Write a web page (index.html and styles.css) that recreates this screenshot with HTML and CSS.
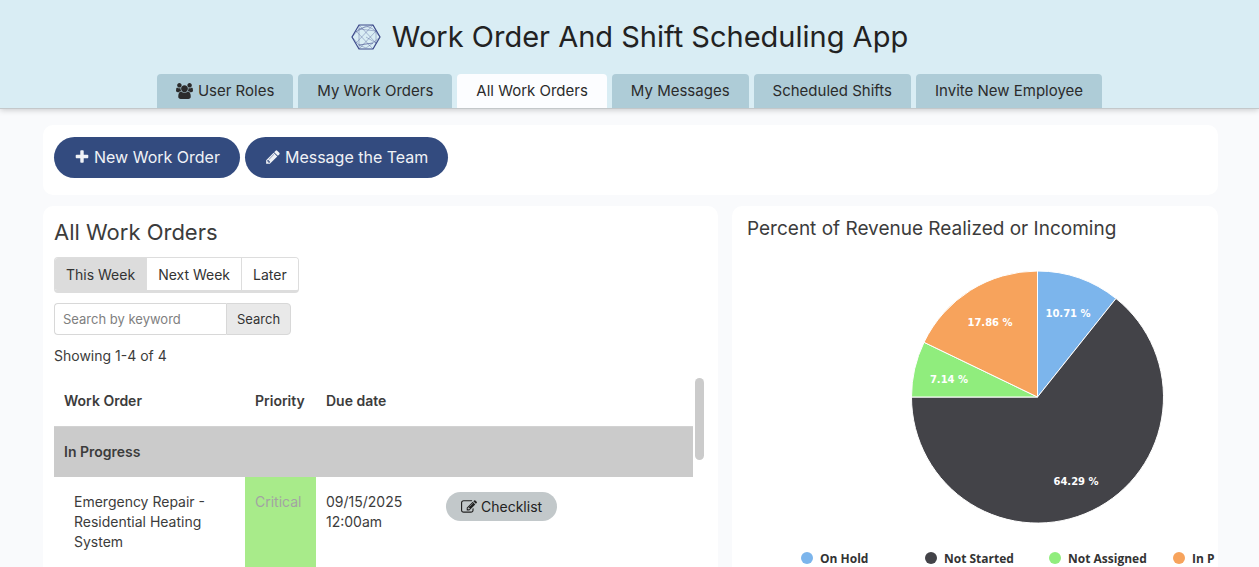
FILE: index.html
```
<!DOCTYPE html>
<html lang="en">
  <head>
    <meta charset="UTF-8" />
    <meta name="viewport" content="width=device-width, initial-scale=1.0" />
    <title>Work Order And Shift Scheduling App</title>
    <link rel="stylesheet" href="styles.css">
  </head>
  <body>
    <header class="header">
      <h1 class="app-title">
        <svg class="logo" viewBox="0 0 30 26" aria-hidden="true">
          <path class="logo-web" d="M8 1V25M22 1L25 7V19L22 25M8 5L22 1M8 1L25 19M22 1L5 19M5 7L22 25M25 7L8 25M1 13L8 5L25 7M1 13L8 21L22 19M29 13L22 19L8 21M29 13L22 5L15 2L5 8M15 13L25 19M8 21L15 24L22 19" />
          <path class="logo-edge" d="M8 1H22L29 13L22 25H8L1 13Z" />
        </svg>
        Work Order And Shift Scheduling App
      </h1>
      <nav class="tabs">
        <a class="tab" href="#">
          <svg class="icon icon-users" viewBox="0 0 1920 1792" aria-hidden="true"><path d="M593 896q-162 5-265 128h-134q-82 0-138-40.5t-56-118.5q0-353 124-353 6 0 43.5 21t97.5 42.5 119 21.5q67 0 133-23-5 37-5 66 0 139 81 256zm1071 637q0 120-73 189.5t-194 69.5h-874q-121 0-194-69.5t-73-189.5q0-53 3.5-103.5t14-109 26.5-108.5 43-97.5 62-81 85.5-53.5 111.5-20q10 0 43 21.5t73 48 107 48 135 21.5 135-21.5 107-48 73-48 43-21.5q61 0 111.5 20t85.5 53.5 62 81 43 97.5 26.5 108.5 14 109 3.5 103.5zm-1024-1277q0 106-75 181t-181 75-181-75-75-181 75-181 181-75 181 75 75 181zm704 384q0 159-112.5 271.5t-271.5 112.5-271.5-112.5-112.5-271.5 112.5-271.5 271.5-112.5 271.5 112.5 112.5 271.5zm576 225q0 78-56 118.5t-138 40.5h-134q-103-123-265-128 81-117 81-256 0-29-5-66 66 23 133 23 59 0 119-21.5t97.5-42.5 43.5-21q124 0 124 353zm-128-609q0 106-75 181t-181 75-181-75-75-181 75-181 181-75 181 75 75 181z" /></svg>
          User Roles
        </a>
        <a class="tab" href="#">My Work Orders</a>
        <a class="tab active" href="#">All Work Orders</a>
        <a class="tab" href="#">My Messages</a>
        <a class="tab" href="#">Scheduled Shifts</a>
        <a class="tab" href="#">Invite New Employee</a>
      </nav>
    </header>

    <main class="content">
      <section class="panel actions">
        <button class="btn-main" type="button">
          <svg class="icon" viewBox="0 0 1792 1792" aria-hidden="true"><path d="M1600 736v192q0 40-28 68t-68 28h-416v416q0 40-28 68t-68 28h-192q-40 0-68-28t-28-68v-416h-416q-40 0-68-28t-28-68v-192q0-40 28-68t68-28h416v-416q0-40 28-68t68-28h192q40 0 68 28t28 68v416h416q40 0 68 28t28 68z" /></svg>
          New Work Order
        </button>
        <button class="btn-main" type="button">
          <svg class="icon" viewBox="0 0 1792 1792" aria-hidden="true"><path d="M491 1536l91-91-235-235-91 91v107h128v128h107zm523-928q0-22-22-22-10 0-17 7l-542 542q-7 7-7 17 0 22 22 22 10 0 17-7l542-542q7-7 7-17zm-54-192l416 416-832 832h-416v-416zm683 96q0 53-37 90l-166 166-416-416 166-165q36-38 90-38 53 0 91 38l235 234q37 39 37 91z" /></svg>
          Message the Team
        </button>
      </section>

      <div class="columns">
        <section class="panel orders">
          <h2>All Work Orders</h2>
          <div class="period">
            <button class="period-btn selected" type="button">This Week</button>
            <button class="period-btn" type="button">Next Week</button>
            <button class="period-btn" type="button">Later</button>
          </div>
          <form class="search">
            <input type="text" placeholder="Search by keyword" aria-label="Search by keyword" />
            <button type="submit">Search</button>
          </form>
          <p class="count">Showing 1-4 of 4</p>
          <div class="table-wrap">
            <table>
              <thead>
                <tr>
                  <th class="col-name">Work Order</th>
                  <th class="col-priority">Priority</th>
                  <th class="col-due">Due date</th>
                  <th></th>
                </tr>
              </thead>
              <tbody>
                <tr class="group">
                  <th colspan="4">In Progress</th>
                </tr>
                <tr>
                  <td class="name">Emergency Repair - Residential Heating System</td>
                  <td class="critical">Critical</td>
                  <td>09/15/2025 12:00am</td>
                  <td>
                    <button class="btn-checklist" type="button">
                      <svg class="icon" viewBox="0 0 1792 1792" aria-hidden="true"><path d="M888 1184l116-116-152-152-116 116v56h96v96h56zm440-720q-16-16-33 1l-350 350q-17 17-1 33t33-1l350-350q17-17 1-33zm80 594v190q0 119-84.5 203.5t-203.5 84.5h-832q-119 0-203.5-84.5t-84.5-203.5v-832q0-119 84.5-203.5t203.5-84.5h832q63 0 117 25 15 7 18 23 3 17-9 29l-49 49q-14 14-32 8-23-6-45-6h-832q-66 0-113 47t-47 113v832q0 66 47 113t113 47h832q66 0 113-47t47-113v-126q0-13 9-22l64-64q15-15 35-7t20 29zm-96-738l288 288-672 672h-288v-288zm444 132l-92 92-288-288 92-92q28-28 68-28t68 28l152 152q28 28 28 68t-28 68z" /></svg>
                      Checklist
                    </button>
                  </td>
                </tr>
              </tbody>
            </table>
            <div class="scroll-thumb"></div>
          </div>
        </section>

        <section class="panel revenue">
          <h3>Percent of Revenue Realized or Incoming</h3>
          <div class="chart">
            <svg width="580" height="340" viewBox="0 0 580 340" role="img" aria-label="Revenue by status">
              <g class="slices">
                <path fill="#7cb5ec" d="M290.5 147V21A126 126 0 0 1 369 48.5Z" />
                <path fill="#434348" d="M290.5 147L369 48.5A126 126 0 1 1 164.5 147Z" />
                <path fill="#90ed7d" d="M290.5 147H164.5A126 126 0 0 1 177 92.3Z" />
                <path fill="#f7a35c" d="M290.5 147L177 92.3A126 126 0 0 1 290.5 21Z" />
              </g>
              <g class="slice-labels">
                <text x="321" y="67">10.71 %</text>
                <text x="329" y="235">64.29 %</text>
                <text x="202" y="133">7.14 %</text>
                <text x="243" y="76">17.86 %</text>
              </g>
              <g class="legend">
                <circle cx="60" cy="308" r="6" fill="#7cb5ec" />
                <text x="73" y="313">On Hold</text>
                <circle cx="184" cy="308" r="6" fill="#434348" />
                <text x="197" y="313">Not Started</text>
                <circle cx="308" cy="308" r="6" fill="#90ed7d" />
                <text x="321" y="313">Not Assigned</text>
                <circle cx="432" cy="308" r="6" fill="#f7a35c" />
                <text x="445" y="313">In P</text>
              </g>
            </svg>
          </div>
        </section>
      </div>
    </main>
  </body>
</html>
```
FILE: styles.css
```
* {
  box-sizing: border-box;
}
body {
  margin: 0;
  font-family: Inter, sans-serif;
  font-size: 14px;
  line-height: 20px;
  color: #3c3c3c;
  background: #f9fafc;
}
h1,
h2,
h3,
p {
  margin: 0;
  font-weight: 400;
}
button,
input {
  font-family: inherit;
  font-size: inherit;
  line-height: inherit;
  margin: 0;
}
button {
  cursor: pointer;
}
.icon {
  width: 16px;
  height: 16px;
  fill: currentColor;
}

/* Header */
.header {
  background: #d9edf4;
  border-bottom: 1px solid #c4c8ca;
  box-shadow: 0 1px 6px rgba(0, 0, 0, 0.2);
}
.app-title {
  display: flex;
  justify-content: center;
  align-items: center;
  gap: 11px;
  height: 74px;
  font-size: 29px;
  color: #222;
}
.logo {
  width: 30px;
  height: 26px;
  fill: none;
  stroke: #3d4a8a;
}
.logo-web {
  stroke-width: 0.6;
  opacity: 0.6;
}
.logo-edge {
  stroke-width: 1.2;
}
.tabs {
  display: flex;
  justify-content: center;
  gap: 5px;
}
.tab {
  display: flex;
  align-items: center;
  gap: 5px;
  height: 34px;
  padding: 0 19px;
  border-radius: 4px 4px 0 0;
  background: #aeccd7;
  color: #2b2b2b;
  font-size: 15px;
  text-decoration: none;
}
.tab.active {
  background: #fcfdff;
}
.icon-users {
  width: 17px;
}

/* Panels */
.content {
  padding: 16px 41px 24px 43px;
}
.panel {
  background: #fff;
  border-radius: 10px;
}
.actions {
  display: flex;
  gap: 5px;
  padding: 12px 11px 17px;
  margin-bottom: 11px;
}
.btn-main {
  display: flex;
  align-items: center;
  gap: 4px;
  height: 41px;
  padding: 0 20px 1px;
  border: none;
  border-radius: 21px;
  background: #334b7f;
  color: #f0f2f6;
  font-size: 16px;
}
.columns {
  display: grid;
  grid-template-columns: 25fr 18fr;
  gap: 14px;
}

/* Work orders */
.orders {
  padding: 11px;
}
.orders h2 {
  font-size: 22px;
  line-height: 30px;
  margin-bottom: 10px;
}
.period {
  display: flex;
  width: fit-content;
  border: 1px solid #ddd;
  border-bottom-width: 3px;
  border-radius: 4px;
  margin-bottom: 10px;
  overflow: hidden;
}
.period-btn {
  height: 32px;
  padding: 2px 11px 0;
  border: none;
  border-left: 1px solid #ddd;
  background: #fff;
  color: #333;
}
.period-btn.selected {
  border-left: none;
  background: #dcdcdc;
}
.search {
  display: flex;
  height: 32px;
  margin-bottom: 11px;
  font-size: 13px;
}
.search input {
  width: 172px;
  padding: 0 8px;
  border: 1px solid #d8d8d8;
  border-right: none;
  border-radius: 4px 0 0 4px;
}
.search input::placeholder {
  color: #808080;
}
.search button {
  padding: 0 10px;
  border: 1px solid #d8d8d8;
  border-radius: 0 4px 4px 0;
  background: #e9e9e9;
  color: #333;
}
.count {
  margin-bottom: 10px;
}
.table-wrap {
  display: flex;
  align-items: flex-start;
  gap: 2px;
}
table {
  flex: 1;
  border-collapse: separate;
  border-spacing: 0;
  table-layout: fixed;
}
th,
td {
  padding: 15px 10px;
  text-align: left;
  vertical-align: top;
}
th {
  font-weight: 600;
}
.col-name {
  width: 191px;
}
.col-priority {
  width: 71px;
}
.col-due {
  width: 120px;
}
.group th {
  border-top: 1px solid #d2d2d2;
  background: #cbcbcb;
}
td.name {
  padding-left: 20px;
}
td.critical {
  background: #a8eb8a;
  color: #a3a3a3;
}
.scroll-thumb {
  width: 9px;
  height: 82px;
  border-radius: 5px;
  background: #cbcbcb;
  margin: 2px 3px 0 0;
}
.btn-checklist {
  display: flex;
  align-items: center;
  gap: 4px;
  height: 29px;
  padding: 0 15px;
  border: none;
  border-radius: 15px;
  background: #c2c8ca;
  color: #222;
}

/* Revenue chart */
.revenue {
  min-width: 0;
  padding: 8px 2px 8px 15px;
}
.revenue h3 {
  font-size: 19px;
  line-height: 30px;
  margin-bottom: 6px;
}
.chart {
  overflow: hidden;
}
.chart svg {
  display: block;
}
.slices {
  stroke: #fff;
  stroke-linejoin: round;
}
.slice-labels {
  font: bold 10px "DejaVu Sans", sans-serif;
  fill: #fff;
  text-anchor: middle;
}
.legend {
  font: bold 12px "Open Sans", sans-serif;
  fill: #333;
}
```
